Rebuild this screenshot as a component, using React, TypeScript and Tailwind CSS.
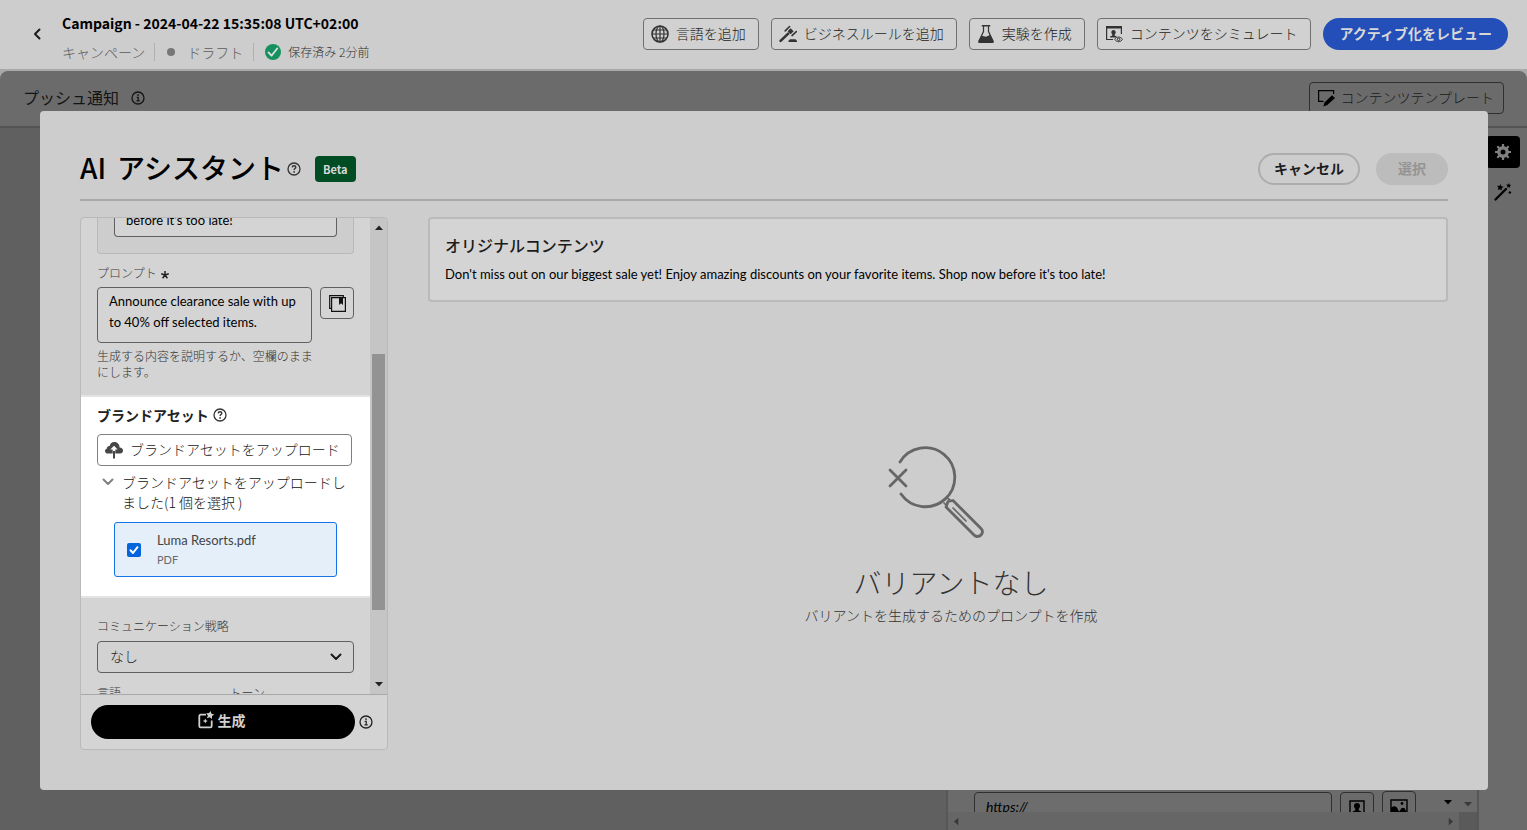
import React from 'react';

type IconProps = { className?: string };

const GlobeIcon = ({ className }: IconProps) => (
  <svg viewBox="0 0 18 18" className={className} fill="none" stroke="currentColor" strokeWidth="1.2">
    <circle cx="9" cy="9" r="8" strokeWidth="1.6" />
    <ellipse cx="9" cy="9" rx="4" ry="8" />
    <path d="M9 1v16M1 9h16M2.2 5h13.6M2.2 13h13.6" />
  </svg>
);

const GavelIcon = ({ className }: IconProps) => (
  <svg viewBox="0 0 18 18" className={className} fill="currentColor">
    <path d="M11 14.300h5.500l1.500 1.500V17H9.500v-1.200z" />
    <path d="M11.600 3.200l3 3-3 3-3-3z" />
    <path d="M1.600 15.900L9.200 8.600" stroke="currentColor" strokeWidth="2.600" strokeLinecap="round" />
    <path d="M6.200 5.900L10.600 1.500M13 10.600l4.300-4" stroke="currentColor" strokeWidth="1.500" strokeLinecap="round" />
  </svg>
);

const FlaskIcon = ({ className }: IconProps) => (
  <svg viewBox="0 0 18 18" className={className}>
    <path d="M6.500 1v5.500L2 16v1h14v-1L11.500 6.500V1" fill="none" stroke="currentColor" strokeWidth="1.200" />
    <path d="M4.800 0h8.400v1.500H4.800zM4.600 10.800l4.400 1 3.900-1.700 3.600 6.100c.2.900-.2 1.800-1 1.800h-13c-.8 0-1.200-.9-1-1.800z" fill="currentColor" />
  </svg>
);

const SimulateIcon = ({ className }: IconProps) => (
  <svg viewBox="0 0 18 18" className={className} fill="none" stroke="currentColor">
    <path d="M8 14.500H1.600v-13h14.800V9" strokeWidth="1.200" />
    <path d="M1 1h16v2.500H1zM8.500 5c1.500 0 2.200 1 2.200 2.300 0 .9-.4 1.800-1 2.300v.8l2 1v1.200H5v-1.200l2.300-1v-.8c-.6-.5-1-1.400-1-2.300C6.300 6 7 5 8.500 5z" fill="currentColor" stroke="none" />
    <path d="M9.700 14.300c1.800-3 6-3 7.800 0-1.800 3.200-6 3.200-7.800 0z" fill="#cfcfcf" />
    <circle cx="13.600" cy="14.300" r="1.300" />
  </svg>
);

const TemplateIcon = ({ className }: IconProps) => (
  <svg viewBox="0 0 18 18" className={className}>
    <path d="M6.500 12.300H1.600V1.600h15V5" fill="none" stroke="currentColor" strokeWidth="1.200" />
    <path d="M15 6.200l3 2.900-7.700 7-4 1.400 1.200-4.100z" fill="currentColor" />
  </svg>
);

const GearIcon = ({ className }: IconProps) => (
  <svg viewBox="0 0 18 18" className={className} fill="none" stroke="currentColor">
    <circle cx="9" cy="9" r="4.200" strokeWidth="3.400" />
    <path d="M9 1v3M9 14v3M1 9h3M14 9h3M3.300 3.300l2.200 2.200M12.500 12.500l2.200 2.200M14.700 3.300l-2.200 2.200M5.500 12.500l-2.200 2.200" strokeWidth="2.200" />
  </svg>
);

const WandIcon = ({ className }: IconProps) => (
  <svg viewBox="0 0 18 18" className={className} fill="currentColor">
    <path d="M1.500 16.500L12 6" stroke="currentColor" strokeWidth="2.300" strokeLinecap="round" />
    <path d="M6.500 1l.8 2.200 2.400.5-2 1.500.1 2.400L6 6.200l-2.300.8.800-2.300L3 2.800l2.400.1zM15 0l.5 1.700 1.800.3-1.400 1.100.2 1.800-1.500-1-1.600.7.500-1.700-1.200-1.300h1.800zM15.800 8l1.700 1.500-1.700 1.500-1.500-1.500z" />
  </svg>
);

const HelpIcon = ({ className }: IconProps) => (
  <svg viewBox="0 0 14 14" className={className} fill="none" stroke="currentColor">
    <circle cx="7" cy="7" r="6" strokeWidth="1.300" />
    <path d="M5.200 5.400c.1-1.100.8-1.700 1.800-1.700 1.100 0 1.800.6 1.800 1.500 0 1.300-1.700 1.300-1.700 2.700" strokeWidth="1.400" />
    <circle cx="7.100" cy="9.900" r=".9" fill="currentColor" stroke="none" />
  </svg>
);

const InfoIcon = ({ className }: IconProps) => (
  <svg viewBox="0 0 14 14" className={className} fill="none" stroke="currentColor">
    <circle cx="7" cy="7" r="6" strokeWidth="1.300" />
    <path d="M5.700 6.300H7.200v3.500M5.500 9.900h3.200" strokeWidth="1.200" />
    <circle cx="7" cy="4.100" r=".9" fill="currentColor" stroke="none" />
  </svg>
);

const ChevronDown = ({ className }: IconProps) => (
  <svg viewBox="0 0 12 8" className={className} fill="none" stroke="currentColor" strokeWidth="2" strokeLinecap="round" strokeLinejoin="round">
    <path d="M1.500 1.500L6 6l4.500-4.500" />
  </svg>
);

const Triangle = ({ className }: IconProps) => (
  <svg viewBox="0 0 8 5" className={className} fill="currentColor">
    <path d="M0 0h8L4 4.500z" />
  </svg>
);

const LibraryIcon = ({ className }: IconProps) => (
  <svg viewBox="0 0 18 18" className={className}>
    <path d="M3 14.400H1.700V1.600h13.600V3" fill="none" stroke="currentColor" strokeWidth="1.200" />
    <path d="M3.600 3.600h13.800v13.800H3.600z" fill="none" stroke="currentColor" strokeWidth="1.200" />
    <path d="M11 3.500h4v7.500l-2-1.800-2 1.800z" fill="currentColor" />
  </svg>
);

const UploadIcon = ({ className }: IconProps) => (
  <svg viewBox="0 0 18 18" className={className}>
    <path d="M14.600 6.600C14.600 3 12 1 9.200 1 6.600 1 4.900 2.700 4.700 5 2.900 4.900 1.800 6 1.900 7.500.7 7.900 0 8.800 0 10c0 1.500 1.200 2.600 2.800 2.600H7.700V8.500H5.300L9 4.700l3.700 3.800h-2.400v4.100h4.900c1.700 0 2.800-1.300 2.800-3 0-1.600-1.300-3-3.400-3z" fill="currentColor" />
    <path d="M8 10h2v7.500H8z" fill="currentColor" />
  </svg>
);

const GenerateIcon = ({ className }: IconProps) => (
  <svg viewBox="0 0 18 18" className={className}>
    <path d="M9 3.700H3.700a1.400 1.400 0 0 0-1.400 1.400v9.800a1.400 1.400 0 0 0 1.400 1.400h9.600a1.400 1.400 0 0 0 1.400-1.400V9.500" fill="none" stroke="currentColor" strokeWidth="1.800" />
    <path d="M13.500 0l1 2.700 2.800.8-2.300 1.600v2.900l-2.300-1.700-2.800.9 1-2.700L9.200 2.200l2.900-.1zM8.300 7.500l.8 1.700 1.700.8-1.700.8-.8 1.700-.8-1.700-1.700-.8 1.700-.8z" fill="currentColor" />
  </svg>
);

const NoResultsIcon = ({ className }: IconProps) => (
  <svg viewBox="0 0 98 94" className={className} fill="none" stroke="currentColor" strokeWidth="2.800" strokeLinecap="round" strokeLinejoin="round">
    <path d="M12 16A29.500 29.500 0 1 1 13 48" />
    <path d="M2 24L18 40M18 24L2 40" />
    <path d="M60 55.500l5-1 28 28c3 3 1 8-4 8-1 0-2-.5-3-1.500L58 61z" />
    <path d="M56 57l3 3M60 52.500l3 2.500M65 62l13 13" strokeWidth="1.700" />
  </svg>
);

const PersonIcon = ({ className }: IconProps) => (
  <svg viewBox="0 0 16 16" className={className}>
    <path d="M1 1h14v14H1z" fill="none" stroke="currentColor" strokeWidth="1.400" />
    <path d="M8 3c2 0 3 1.300 3 3 0 1.200-.5 2.200-1.300 2.800v1.400L13 12v3H3v-3l3.300-1.800V8.800C5.500 8.200 5 7.200 5 6c0-1.700 1-3 3-3z" fill="currentColor" />
  </svg>
);

const ImageIcon = ({ className }: IconProps) => (
  <svg viewBox="0 0 18 16" className={className}>
    <path d="M1 1h16v14H1z" fill="none" stroke="currentColor" strokeWidth="1.400" />
    <circle cx="12" cy="4.500" r="1.400" fill="currentColor" />
    <path d="M1 9.500c1-2.500 5-3.500 6.500 0l1.500 3 1.500-1.500c.5-3 4.500-3 5 0l1.500 2v2H1z" fill="currentColor" />
  </svg>
);

const Divider = () => <span className="h-[18px] w-px bg-[#b0b0b0]" />;

function ToolbarButton({ icon, children }: { icon: React.ReactNode; children: React.ReactNode }) {
  return (
    <button className="flex h-8 items-center gap-[7px] rounded border border-[#707070] bg-[#d1d1d1] pr-3 pl-[7px] text-sm font-light whitespace-nowrap text-[#1c1c1c]">
      {icon}
      <span className="pb-0.5">{children}</span>
    </button>
  );
}

function TopBar() {
  return (
    <header className="flex h-[71px] shrink-0 items-center justify-between border-b-2 border-[#a9a9a9] bg-[#cdcdcd] pr-[19px] pb-px pl-[30px]">
      <div className="flex items-center gap-[18px]">
        <button aria-label="戻る" className="flex h-6 w-[14px] items-center justify-center text-[#1c1c1c]">
          <ChevronDown className="w-3 rotate-90" />
        </button>
        <div className="pt-[6px]">
          <h2 className="text-sm leading-6 font-bold text-black">Campaign - 2024-04-22 15:35:08 UTC+02:00</h2>
          <div className="mt-[5px] flex h-6 items-center text-sm font-light text-[#5c5c5c]">
            <span>キャンペーン</span>
            <span className="mr-2 ml-[9px] flex items-center"><Divider /></span>
            <span className="mr-3 ml-1 size-2 rounded-full bg-[#777777]" />
            <span>ドラフト</span>
            <span className="mr-[11px] ml-[10px] flex items-center"><Divider /></span>
            <svg viewBox="0 0 16 16" className="mr-[7px] size-4">
              <circle cx="8" cy="8" r="8" fill="#15915f" />
              <path d="M3.500 8.400l3 3.300 5.700-7.200" fill="none" stroke="#e0e0e0" strokeWidth="1.800" strokeLinecap="round" strokeLinejoin="round" />
            </svg>
            <span className="text-xs text-[#303030]">保存済み 2分前</span>
          </div>
        </div>
      </div>
      <div className="flex items-center gap-3 text-[#333333]">
        <ToolbarButton icon={<GlobeIcon className="size-[18px] text-[#333]" />}>言語を追加</ToolbarButton>
        <ToolbarButton icon={<GavelIcon className="size-[18px] text-[#333]" />}>ビジネスルールを追加</ToolbarButton>
        <ToolbarButton icon={<FlaskIcon className="size-[18px] text-[#333]" />}>実験を作成</ToolbarButton>
        <ToolbarButton icon={<SimulateIcon className="size-[18px] text-[#333]" />}>コンテンツをシミュレート</ToolbarButton>
        <button className="h-8 rounded-full bg-[#244fb8] pr-4 pb-[3px] pl-[17px] text-sm font-bold whitespace-nowrap text-[#d8d8d8]">アクティブ化をレビュー</button>
      </div>
    </header>
  );
}

function Workspace() {
  return (
    <div className="flex min-h-0 flex-1 flex-col bg-[#a9a9a9]">
      <div className="flex h-[57px] shrink-0 items-center justify-between rounded-t-lg border-b-2 border-[#545454] bg-[#6b6b6b] px-[23px] pb-px">
        <div className="flex items-center gap-3 text-[#141414]">
          <h3 className="pb-0.5 text-base">プッシュ通知</h3>
          <InfoIcon className="size-[14px]" />
        </div>
        <button className="flex h-8 items-center gap-[5px] rounded border border-[#303030] pr-[9px] pl-[7px] text-sm font-light text-[#1a1a1a]">
          <TemplateIcon className="size-[18px] text-black" />
          <span className="pb-0.5">コンテンツテンプレート</span>
        </button>
      </div>
      <div className="flex min-h-0 flex-1">
        <div className="flex-1 bg-[#606060]" />
        <div className="flex w-[533px] flex-col justify-end border-x-2 border-[#575757] bg-[#6b6b6b]">
          <div className="flex h-[22px] items-start gap-2 overflow-hidden pl-[26px]">
            <input aria-label="URL" defaultValue="https://" className="mt-[2px] h-8 w-[358px] shrink-0 rounded border border-[#303030] bg-[#6d6d6d] px-[11px] pb-1 font-['Lato',sans-serif] text-sm text-black italic" />
            <button aria-label="パーソナライズ" className="mt-[2px] flex h-8 w-[34px] shrink-0 items-center justify-center rounded border border-[#303030] text-black">
              <PersonIcon className="size-4" />
            </button>
            <button aria-label="画像" className="mt-px flex h-8 w-[34px] shrink-0 items-center justify-center rounded border border-[#303030] text-black">
              <ImageIcon className="w-[18px]" />
            </button>
            <Triangle className="mt-[10px] ml-5 w-2 shrink-0 text-black" />
            <Triangle className="mt-3 ml-1 w-2 shrink-0 text-[#3a3a3a]" />
          </div>
          <div className="flex h-[18px] bg-[#5a5a5a]">
            <div className="flex flex-1 items-center justify-between bg-[#666666] px-1 text-[#383838]">
              <Triangle className="w-2 rotate-90" />
              <Triangle className="w-2 -rotate-90" />
            </div>
            <div className="w-[18px]" />
          </div>
        </div>
        <div className="flex w-12 flex-col items-end bg-[#6b6b6b] pt-2 pr-[7px]">
          <button aria-label="設定" className="flex h-8 w-[34px] items-center justify-center rounded bg-black text-[#808080]">
            <GearIcon className="size-[18px]" />
          </button>
          <button aria-label="AI アシスタント" className="mt-2 flex h-8 w-[34px] items-center justify-center text-black">
            <WandIcon className="size-[18px]" />
          </button>
        </div>
      </div>
    </div>
  );
}

function BrandAssets() {
  return (
    <section className="mt-[15px] border-y-2 border-[#e3e3e3] bg-white pt-2 pr-[18px] pb-[19px] pl-4">
      <h3 className="flex items-center gap-1 text-sm leading-5 font-bold text-[#222222]">
        ブランドアセット
        <HelpIcon className="size-[14px] text-[#333]" />
      </h3>
      <button className="mt-[9px] flex h-8 w-full items-center gap-[7px] rounded border border-[#808080] pl-[7px] text-sm font-light whitespace-nowrap text-[#222222]">
        <UploadIcon className="size-[18px] shrink-0 text-[#464646]" />
        <span className="pb-0.5">ブランドアセットをアップロード</span>
      </button>
      <button className="mt-[6px] flex w-full items-start gap-2 pl-[5px] text-left text-sm leading-5 font-light text-[#111111]">
        <ChevronDown className="mt-[6px] w-3 shrink-0 text-[#808080]" />
        <span className="flex-1">
          ブランドアセットをアップロードし
          <br />
          ました(1 個を選択 )
        </span>
      </button>
      <label className="mt-[10px] mr-[15px] ml-[17px] flex h-[55px] items-center gap-4 rounded-[3px] border border-[#1473e6] bg-[#e5effa] pl-3">
        <span className="relative flex size-[14px]">
          <input type="checkbox" defaultChecked className="size-[14px] appearance-none rounded-[2px] bg-[#0265dc]" />
          <svg viewBox="0 0 14 14" className="pointer-events-none absolute inset-0" fill="none" stroke="white" strokeWidth="2" strokeLinecap="round" strokeLinejoin="round">
            <path d="M3.500 7.300l2.500 2.700 4.500-5.800" />
          </svg>
        </span>
        <span className="flex flex-col font-['Lato',sans-serif] text-[#444444]">
          <span className="text-[13px] leading-5">Luma Resorts.pdf</span>
          <span className="text-[11px] leading-5 text-[#6a6a6a]">PDF</span>
        </span>
      </label>
    </section>
  );
}

function SettingsPanel() {
  return (
    <aside className="flex w-[308px] shrink-0 flex-col overflow-hidden rounded border border-[#b9b9b9] bg-[#d4d4d4]">
      <div className="flex min-h-0 flex-1">
        <div className="min-w-0 flex-1 overflow-hidden">
          <div className="mx-4 flex h-9 items-end rounded-b border border-t-0 border-[#b9b9b9] bg-[#cdcdcd] px-4 pb-4">
            <div className="flex h-[19px] w-full items-end overflow-hidden rounded-b border border-t-0 border-[#606060] bg-[#d4d4d4] px-[11px] pb-[6px] font-['Lato',sans-serif] text-[13px] leading-5 text-black">
              before it's too late!
            </div>
          </div>
          <label htmlFor="prompt" className="mx-4 mt-[11px] flex items-center gap-1 text-xs leading-4 font-light text-[#3c3c3c]">
            プロンプト
            <svg viewBox="0 0 8 8" className="mt-1 size-2" stroke="#222" strokeWidth="1.500">
              <path d="M4 4V0M4 4l3.800-1.200M4 4l2.400 3.300M4 4L1.600 7.300M4 4L.2 2.800" />
            </svg>
          </label>
          <div className="mx-4 mt-[6px] flex items-start gap-2">
            <textarea
              id="prompt"
              defaultValue="Announce clearance sale with up to 40% off selected items."
              className="h-14 min-w-0 flex-1 resize-none overflow-hidden rounded border border-[#606060] bg-[#d4d4d4] px-[11px] pt-[3px] font-['Lato',sans-serif] text-[13px] leading-[21px] text-black"
            />
            <button aria-label="プロンプトライブラリ" className="flex h-8 w-[34px] items-center justify-center rounded border border-[#606060] text-[#111]">
              <LibraryIcon className="size-[18px]" />
            </button>
          </div>
          <p className="mx-4 mt-[5px] text-xs leading-4 font-light text-[#333333]">
            生成する内容を説明するか、空欄のまま
            <br />
            にします。
          </p>
          <BrandAssets />
          <div className="mx-4 mt-5">
            <label htmlFor="strategy" className="block text-xs leading-4 font-light text-[#333333]">コミュニケーション戦略</label>
            <div className="relative mt-[7px]">
              <select id="strategy" className="h-8 w-full appearance-none rounded border border-[#606060] bg-[#d2d2d2] px-3 pb-0.5 text-sm font-light text-[#222]">
                <option>なし</option>
              </select>
              <ChevronDown className="pointer-events-none absolute top-3 right-3 w-3 text-[#1a1a1a]" />
            </div>
          </div>
          <div className="mx-4 mt-3 grid grid-cols-2 gap-2 text-xs leading-4 font-light text-[#333333]">
            <span>言語</span>
            <span>トーン</span>
          </div>
        </div>
        <div className="flex w-[17px] shrink-0 flex-col items-center bg-[#c5c5c5] py-[7px] text-[#222]">
          <Triangle className="w-2 rotate-180" />
          <div className="flex-[124]" />
          <div className="w-[13px] flex-[256] bg-[#939393]" />
          <div className="flex-[72]" />
          <Triangle className="w-2" />
        </div>
      </div>
      <div className="flex h-[55px] shrink-0 items-center gap-1 border-t border-[#a8a8a8] pr-[14px] pl-[10px]">
        <button className="flex h-[34px] flex-1 items-center justify-center gap-[3px] rounded-full bg-black pr-1 pb-1 text-sm font-bold text-[#d0d0d0]">
          <GenerateIcon className="size-[18px]" />
          生成
        </button>
        <InfoIcon className="size-[14px] text-[#222]" />
      </div>
    </aside>
  );
}

function AssistantDialog() {
  return (
    <div
      role="dialog"
      aria-label="AI アシスタント"
      className="absolute inset-x-10 top-[111px] bottom-10 mr-[-1px] flex flex-col rounded bg-[#cdcdcd] px-10 pt-[42px] pb-10"
    >
      <div className="flex items-center justify-between border-b-2 border-[#a8a8a8] pb-[14px]">
        <div className="flex items-center">
          <h1 className="flex gap-[11px] pb-1 text-[28px] leading-7 font-medium text-black">
            <span>AI</span>
            <span>アシスタント</span>
          </h1>
          <HelpIcon className="ml-[3px] size-[14px] text-[#333]" />
          <span className="ml-[14px] rounded bg-[#004d23] px-2 text-[11px] leading-[26px] font-bold text-[#d8d8d8]">Beta</span>
        </div>
        <div className="flex gap-4 text-sm font-bold">
          <button className="h-8 rounded-full border-2 border-[#adadad] px-[14px] pb-[3px] text-[#1c1c1c]">キャンセル</button>
          <button disabled className="h-8 rounded-full bg-[#bcbcbc] px-[22px] pb-[3px] text-[#949494]">選択</button>
        </div>
      </div>
      <div className="flex min-h-0 flex-1 gap-10 pt-4">
        <SettingsPanel />
        <div className="flex min-w-0 flex-1 flex-col">
          <div className="rounded border-2 border-[#bababa] bg-[#d4d4d4] px-[15px] py-[14px]">
            <h2 className="text-base leading-6 font-medium text-[#1c1c1c]">オリジナルコンテンツ</h2>
            <p className="mt-[5px] font-['Lato',sans-serif] text-[13px] leading-6 text-black">
              Don't miss out on our biggest sale yet! Enjoy amazing discounts on your favorite items. Shop now before it's too late!
            </p>
          </div>
          <div className="flex flex-1 flex-col items-center pt-36 pl-[26px]">
            <NoResultsIcon className="mr-7 w-[98px] text-[#666666]" />
            <h2 className="mt-6 text-[28px] leading-9 font-light text-[#333333]">バリアントなし</h2>
            <p className="mt-[5px] text-sm leading-5 font-light text-[#333333]">バリアントを生成するためのプロンプトを作成</p>
          </div>
        </div>
      </div>
    </div>
  );
}

export default function App() {
  return (
    <div className="relative flex h-screen flex-col overflow-hidden bg-[#606060] font-['Noto_Sans_CJK_JP',sans-serif]">
      <TopBar />
      <Workspace />
      <AssistantDialog />
    </div>
  );
}
